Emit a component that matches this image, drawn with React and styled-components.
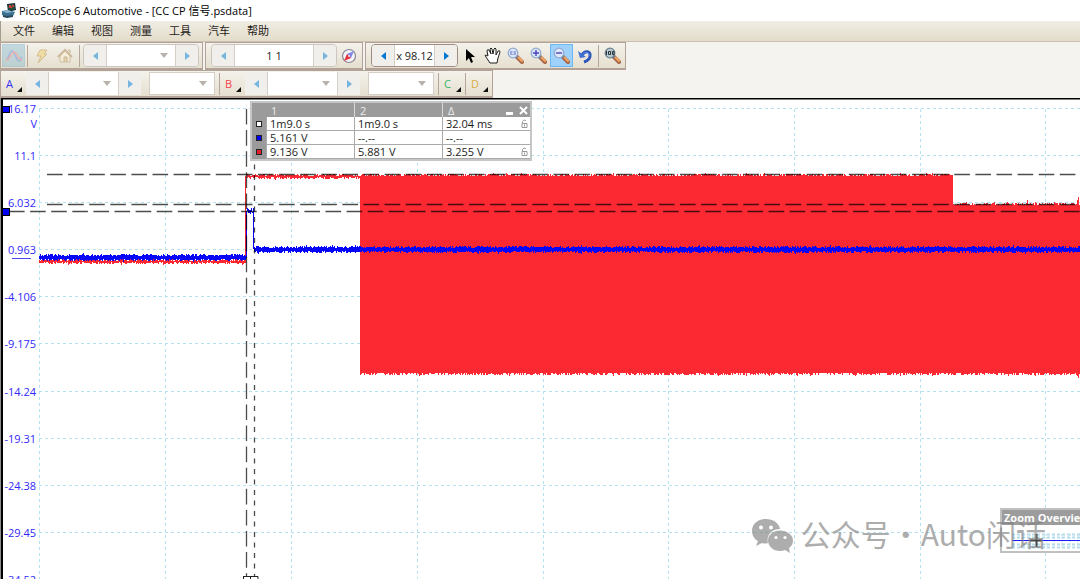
import React from "react";
import styled, { createGlobalStyle } from "styled-components";

const GlobalStyle = createGlobalStyle`
  * { box-sizing: border-box; }
  body {
    margin: 0;
    background: #fff;
    color: #1c1c1c;
    font: 11px/14px "Open Sans", "Noto Sans CJK SC", sans-serif;
  }
  button, input, select { font: inherit; color: inherit; margin: 0; padding: 0; border: 0; border-radius: 0; }
  svg { display: block; }
`;

const Page = styled.main`
  min-height: 100vh;
  overflow: hidden;
`;

const TitleBar = styled.header`
  display: flex;
  align-items: center;
  gap: 2px;
  height: 21px;
  padding-left: 1px;
  background: #fff;
`;

const Title = styled.h1`
  margin: 0;
  font-size: 11px;
  font-weight: 400;
  line-height: 20px;
  color: #000;
`;

const MenuBar = styled.nav`
  display: flex;
  gap: 17px;
  height: 21px;
  padding-left: 12px;
  border-left: 1px solid #a39c8f;
  border-bottom: 1px solid #cbbfb2;
  background: linear-gradient(#f1ede4, #e3dcca);
`;

const MenuItem = styled.button`
  background: none;
  line-height: 20px;
  color: #1f1c19;
`;

const ToolRow = styled.div`
  display: flex;
  gap: 2px;
  height: 28px;
  background: #f5f3f0;
`;

const Strip = styled.div`
  display: flex;
  align-items: center;
  height: 28px;
  padding: 0 ${(p) => p.$end || 0}px 0 ${(p) => p.$start || 0}px;
  border: solid #b3a298;
  border-width: 1px 1px 2px 1px;
  background: linear-gradient(#f4f2ec, #e6dfcf);
`;

const Divider = styled.span`
  width: 1px;
  height: 22px;
  margin: 0 ${(p) => p.$gap || 0}px;
  background: #b5a59b;
`;

const ToolButton = styled.button`
  display: grid;
  place-items: center;
  width: 23px;
  height: 23px;
  background: ${(p) => p.$fill || "none"};
  border: 1px solid ${(p) => p.$line || "transparent"};
  opacity: ${(p) => (p.$dim ? 0.45 : 1)};
`;

const Stepper = styled.div`
  display: flex;
  height: 23px;
  overflow: hidden;
  border: ${(p) => (p.$flat ? "0" : p.$strong ? "1px solid #a08c80" : "1px solid #cdc6c0")};
  border-radius: ${(p) => (p.$flat ? 0 : 4)}px;
  background: #f1efeb;
`;

const StepButton = styled.button`
  display: grid;
  place-items: center;
  width: 22px;
  background: #f1efeb;
  color: ${(p) => (p.$strong ? "#0878cf" : "#75b5df")};
`;

const Field = styled.input`
  width: ${(p) => p.$w}px;
  background: #fff;
  border: solid #d5cec7;
  border-width: 0 1px;
  text-align: center;
`;

const Combo = styled.label`
  display: grid;
  align-items: center;
  width: ${(p) => p.$w}px;
  height: ${(p) => (p.$boxed ? "23px" : "auto")};
  margin-left: ${(p) => (p.$boxed ? 8 : 0)}px;
  margin-right: ${(p) => (p.$boxed ? 4 : 0)}px;
  border: 1px solid #d5cec7;
  border-width: ${(p) => (p.$boxed ? "1px" : "0 1px")};
  background: #fff;
  color: #b9b1aa;
  select, svg { grid-area: 1 / 1; }
  select { width: 100%; height: 100%; appearance: none; background: transparent; }
  svg { justify-self: end; margin-right: 7px; pointer-events: none; }
`;

const ChannelButton = styled.button`
  display: flex;
  align-items: center;
  justify-content: space-between;
  width: ${(p) => p.$w || 25}px;
  height: 24px;
  padding: 0 4px 0 5px;
  background: none;
  color: ${(p) => p.$color};
  svg { align-self: flex-end; margin-bottom: 4px; }
`;

const Scope = styled.section`
  position: relative;
  overflow: hidden;
  background: #fff;
`;

const Plot = styled.svg`
  width: 100%;
  height: auto;
`;

const AxisText = styled.text`
  font-size: 11px;
  fill: #3129fa;
  text-anchor: end;
`;

const Rulers = styled.div`
  position: absolute;
  top: 3px;
  left: 250px;
  width: 282px;
  border: 2px solid #c6c6c6;
  background: #9b9b9b;
`;

const RulerTable = styled.table`
  width: 100%;
  table-layout: fixed;
  border-collapse: separate;
  border-spacing: 0;
  th, td { height: 14px; padding: 0 0 0 3px; line-height: 13px; text-align: left; }
  th { color: #ececec; font-weight: 400; border-left: 1px solid #d8d8d8; padding-left: 5px; }
  th:nth-child(-n + 2) { border-left: 0; }
  td { background: #fff; border: solid #aaa; border-width: 0 0 1px 1px; }
  td:first-child { background: #9b9b9b; border: 0; padding: 0 0 0 4px; }
`;

const CellLine = styled.span`
  display: flex;
  justify-content: space-between;
  align-items: center;
  padding-right: 2px;
`;

const WindowButtons = styled.span`
  display: flex;
  gap: 6px;
`;

const GlyphButton = styled.button`
  display: grid;
  place-items: center;
  height: 12px;
  background: none;
`;

const Swatch = styled.span`
  display: block;
  width: 6px;
  height: 6px;
  border: 1px solid #222;
  background: ${(p) => p.$color};
`;

const Overview = styled.aside`
  position: absolute;
  right: 0;
  bottom: 26px;
  width: 80px;
  height: 45px;
  overflow: hidden;
  border: 2px solid #c0c0c0;
  border-right: 0;
  background: #fff;
`;

const OverviewTitle = styled.h2`
  margin: 0;
  padding-left: 2px;
  background: #9c9c9c;
  color: #fff;
  font-size: 11px;
  font-weight: 700;
  line-height: 15px;
  white-space: nowrap;
`;

const Watermark = styled.div`
  position: absolute;
  right: 34px;
  bottom: 26px;
  display: flex;
  align-items: flex-end;
  gap: 8px;
  color: #808080;
  opacity: 0.64;
  font: 30px/40px "Noto Sans CJK SC", sans-serif;
  white-space: pre;
`;

const Arrow = ({ right }) => (
  <svg width="5" height="8" viewBox="0 0 5 8">
    <path d={right ? "M0 0L5 4L0 8Z" : "M5 0L0 4L5 8Z"} fill="currentColor" />
  </svg>
);

const Caret = () => (
  <svg width="8" height="5" viewBox="0 0 8 5">
    <path d="M0 0H8L4 5Z" fill="currentColor" />
  </svg>
);

const Select = ({ w, boxed, label }) => (
  <Combo $w={w} $boxed={boxed}>
    <select aria-label={label} />
    <Caret />
  </Combo>
);

const Channel = ({ name, color, w }) => (
  <ChannelButton $color={color} $w={w}>
    {name}
    <svg width="5" height="5" viewBox="0 0 5 5"><path d="M5 0V5H0Z" fill="#111" /></svg>
  </ChannelButton>
);

const ChannelInputs = ({ name, color }) => (
  <>
    <Channel name={name} color={color} />
    <Stepper $flat>
      <StepButton aria-label={`${name} lower range`}><Arrow /></StepButton>
      <Select w={71} label={`${name} range`} />
      <StepButton aria-label={`${name} higher range`}><Arrow right /></StepButton>
    </Stepper>
    <Select w={66} boxed label={`${name} coupling`} />
  </>
);

const AppIcon = () => (
  <svg width="16" height="16" viewBox="0 0 16 16">
    <path d="M6 1L14 0L15 7L7 9Z" fill="#16313a" />
    <path d="M7 2L13 1L14 6L8 7Z" fill="#25513a" />
    <path d="M8 5L9 2L10 5L12 2L13 4" fill="none" stroke="#ee3b39" />
    <path d="M1 8L7 7L14 9L12 13L6 14L1 12Z" fill="#3b7191" />
    <path d="M1 8L7 7L12 9L6 10Z" fill="#8bb6ce" />
    <path d="M2 12L6 13L12 12V14L6 15L2 14Z" fill="#28495b" />
  </svg>
);

const Wave = () => (
  <svg width="18" height="16" viewBox="0 0 18 16" fill="none" strokeWidth="1.5">
    <path d="M1 11C4 12 4 3 7 3S11 13 14 13S15 10 17 9" stroke="#4f7de0" />
    <path d="M1 12C5 12 6 5 9 4S12 12 17 12" stroke="#ec7268" />
  </svg>
);

const Bolt = () => (
  <svg width="14" height="16" viewBox="0 0 14 16">
    <path d="M5 2H12L9 6H12L3 15L6 8H2Z" fill="#f2cf58" stroke="#b5893b" />
  </svg>
);

const House = () => (
  <svg width="16" height="16" viewBox="0 0 16 16">
    <path d="M3 8V14H13V8L8 3Z" fill="#fff5d5" stroke="#ae9362" />
    <path d="M1 9L8 2L15 9" fill="none" stroke="#a77f4c" strokeWidth="2" />
    <path d="M7 14V9H10V14M11 2H13V5" fill="#d7b974" stroke="#a07c4b" />
  </svg>
);

const Compass = () => (
  <svg width="16" height="16" viewBox="0 0 16 16">
    <circle cx="8" cy="8" r="6.5" fill="#f3f4f8" stroke="#8a8594" strokeWidth="1.2" />
    <path d="M13 3L10 10L6 6Z" fill="#7f86e6" />
    <path d="M3 13L6 6L10 10Z" fill="#e5313a" />
    <circle cx="8" cy="8" r="1" fill="#f6dfe2" />
  </svg>
);

const Pointer = () => (
  <svg width="14" height="16" viewBox="0 0 14 16">
    <path d="M3 1V13L6 10L8 15L10 14L8 9H12Z" fill="#000" />
  </svg>
);

const Hand = () => (
  <svg width="17" height="17" viewBox="0 0 17 17">
    <path d="M6 16L2 10Q0 8 2 8L4 9L3 4Q3 2 5 3L7 7L6 2Q7 0 8 2L9 7L10 2Q11 0 12 2L12 8L14 4Q16 3 16 5L14 11L13 16Z" fill="#fff" stroke="#1f1f1f" strokeLinejoin="round" />
  </svg>
);

const Lens = ({ kind }) => (
  <svg width="17" height="17" viewBox="0 0 17 17">
    <path d="M9 9L15 15" stroke="#a8664a" strokeWidth="4" strokeLinecap="round" />
    <path d="M10 9L15 14" stroke="#f2a55f" strokeWidth="2" strokeLinecap="round" />
    <path d="M9 9L10.500 10.500" stroke="#6f7686" strokeWidth="3.500" />
    <circle cx="6" cy="6" r="4.8" fill={kind === "all" ? "#b9c8ce" : "#dce8fb"} stroke={kind === "all" ? "#6c818c" : "#93a9d0"} strokeWidth="1.3" />
    {kind === "in" && <path d="M3 6H9M6 3V9" stroke="#4943b8" strokeWidth="1.4" />}
    {kind === "out" && <path d="M3 6H9" stroke="#4943b8" strokeWidth="1.4" />}
    {kind === "one" && <path d="M4 4V8M8 4V8M6 4.5V5.5M6 7V8" stroke="#5d69bc" />}
    {kind === "all" && <path d="M2.500 4V8M4.500 4.500H6.500V7.500H4.500ZM8.500 4.500H10V7.500H8.500Z" fill="none" stroke="#26343c" />}
  </svg>
);

const Undo = () => (
  <svg width="16" height="16" viewBox="0 0 16 16">
    <path d="M5 7C8 2 14 3 13 8C13 11 10 13 7 14" fill="none" stroke="#2d56ba" strokeWidth="3" />
    <path d="M5 7C8 3 13 4 12 8" fill="none" stroke="#6592eb" />
    <path d="M1 3L3 10L9 9Z" fill="#3e6ed2" />
  </svg>
);

const Lock = () => (
  <svg width="7" height="9" viewBox="0 0 7 9" fill="none" stroke="#999">
    <path d="M1.5 4V2.5A2 2 0 0 1 5 2" />
    <path d="M1 4.5H6V8.5H1ZM3.5 5.5V7.5" />
  </svg>
);

const WeChat = () => (
  <svg width="41" height="34" viewBox="0 0 41 34">
    <path fill="currentColor" d="M14 0C6 0 0 5 0 12C0 16 2 20 6 22L4 27L10 24Q13 25 16 24C14 16 20 10 28 10C27 4 21 0 14 0Z" />
    <path fill="currentColor" d="M28 11.500C21 11.500 16 16 16 21.500S21 32 28 32Q31 32 33 31L38 34L37 29Q41 26 41 21.500C41 16 35 11.500 28 11.500Z" />
    <g fill="#fff">
      <circle cx="9" cy="8.500" r="2" /><circle cx="19" cy="8.500" r="2" />
      <circle cx="24" cy="18.500" r="1.600" /><circle cx="33" cy="18.500" r="1.600" />
    </g>
  </svg>
);

function makeNoise(seed) {
  let s = seed;
  return () => {
    s = (s * 16807) % 2147483647;
    return s / 2147483647;
  };
}

// One vertical stroke per sample column, its ends scattered around the signal band.
function band(from, to, top, bottom, jitter, seed) {
  const rnd = makeNoise(seed);
  let d = "";
  for (let x = from; x < to; x += 1) {
    const spike = rnd() > 0.96 ? 1 : 0;
    const a = top + Math.round((rnd() - 0.5) * jitter) - spike;
    const b = bottom + Math.round((rnd() - 0.5) * jitter) + spike;
    d += `M${x + 0.5} ${a}V${b}`;
  }
  return d;
}

const redTrace = [
  band(39, 246, 260, 263, 2, 11),
  "M245.500 262V176",
  band(247, 360, 175, 178, 2, 23),
  band(360, 953, 175, 374, 3, 37),
  band(953, 1080, 204, 374, 3, 41),
  "M1078.500 197V378M1077.500 200V376M1027.500 200V206",
].join("");

const blueTrace = [
  band(39, 246, 255, 260, 2, 53),
  "M246.500 258V211",
  band(247, 254, 210, 213, 4, 61),
  "M253.500 211V249",
  band(254, 1080, 247, 252, 2, 71),
].join("");

const axis = [
  ["16.17", 109], ["11.1", 156], ["6.032", 203], ["0.963", 250], ["-4.106", 297], ["-9.175", 344],
  ["-14.24", 392], ["-19.31", 439], ["-24.38", 486], ["-29.45", 533], ["-34.52", 580],
];
const columns = [39, 165, 291, 417, 543, 668, 794, 920, 1045];

const rows = [
  { color: "#fff", cells: ["1m9.0 s", "1m9.0 s", "32.04 ms"], lock: true },
  { color: "#0000f0", cells: ["5.161 V", "--.--", "--.--"], lock: false },
  { color: "#e0202a", cells: ["9.136 V", "5.881 V", "3.255 V"], lock: true },
];

const Waveforms = () => (
  <Plot viewBox="0 98 1080 481" preserveAspectRatio="xMinYMin slice" role="img" aria-label="Signal view">
    <g stroke="#b4e2ee" strokeDasharray="3 3" shapeRendering="crispEdges">
      {axis.map(([t, y]) => <path key={t} d={`M39 ${y - 0.5}H1080`} />)}
      {columns.map((x) => <path key={x} d={`M${x + 0.5} 109V579`} />)}
    </g>
    <g shapeRendering="crispEdges" fill="none">
      <path d={redTrace} stroke="#fc2832" />
      <path d={blueTrace} stroke="#0505fa" />
    </g>
    <g stroke="#000" strokeOpacity="0.7" strokeWidth="1.300">
      <path d="M47 174.500H1080" strokeDasharray="15.600 5.500" />
      <path d="M47 204.500H1080" strokeDasharray="15.600 5.500" />
      <path d="M9 211.500H1080" strokeDasharray="15.600 5.500" />
      <path d="M246.500 109V576" strokeDasharray="15.600 5.500" />
      <path d="M254.500 112V576" strokeDasharray="5 5.500" />
    </g>
    {axis.map(([t, y]) => <AxisText key={t} x="36" y={y + 4}>{t}</AxisText>)}
    <AxisText x="37" y="128">V</AxisText>
    <path d="M12 258.500H31" stroke="#4a46ee" />
    <path d="M0 98.500H1080" stroke="#000" strokeWidth="2" />
    <path d="M0.500 98V579" stroke="#8d8d8d" />
    <path d="M2 98V579" stroke="#000" strokeWidth="2" />
    <g fill="#0000f5" stroke="#000">
      <rect x="2.500" y="106.500" width="7" height="6" />
      <rect x="2.500" y="208.500" width="7" height="7" />
    </g>
    <path d="M243 576.500H258V579M243.500 576V579M250.500 576V579" fill="none" stroke="#222" />
  </Plot>
);

const menus = ["文件", "编辑", "视图", "测量", "工具", "汽车", "帮助"];

export default function App() {
  return (
    <Page>
      <GlobalStyle />
      <TitleBar>
        <AppIcon />
        <Title>PicoScope 6 Automotive - [CC CP 信号.psdata]</Title>
      </TitleBar>
      <MenuBar>
        {menus.map((m) => <MenuItem key={m}>{m}</MenuItem>)}
      </MenuBar>
      <ToolRow>
        <Strip $start={1} $end={3}>
          <ToolButton $dim $fill="#8bbcd0" $line="#70aecb" aria-label="Scope mode"><Wave /></ToolButton>
          <Divider $gap={2} />
          <ToolButton $dim aria-label="Auto setup"><Bolt /></ToolButton>
          <ToolButton $dim aria-label="Home"><House /></ToolButton>
          <Divider $gap={3} />
          <Stepper>
            <StepButton aria-label="Shorter timebase"><Arrow /></StepButton>
            <Select w={70} label="Timebase" />
            <StepButton aria-label="Longer timebase"><Arrow right /></StepButton>
          </Stepper>
        </Strip>
        <Strip $start={5} $end={2}>
          <Stepper>
            <StepButton aria-label="Previous buffer"><Arrow /></StepButton>
            <Field $w={80} defaultValue="1 1" aria-label="Buffer" />
            <StepButton aria-label="Next buffer"><Arrow right /></StepButton>
          </Stepper>
          <ToolButton aria-label="Buffer navigator"><Compass /></ToolButton>
        </Strip>
        <Strip $start={5} $end={1}>
          <Stepper $strong>
            <StepButton $strong aria-label="Decrease zoom"><Arrow /></StepButton>
            <Field $w={41} defaultValue="x 98.12" aria-label="Zoom" />
            <StepButton $strong aria-label="Increase zoom"><Arrow right /></StepButton>
          </Stepper>
          <ToolButton aria-label="Select"><Pointer /></ToolButton>
          <ToolButton aria-label="Pan"><Hand /></ToolButton>
          <ToolButton aria-label="Zoom to region"><Lens kind="one" /></ToolButton>
          <ToolButton aria-label="Zoom in"><Lens kind="in" /></ToolButton>
          <ToolButton $fill="#9fd2fb" $line="#6db8f2" aria-label="Zoom out"><Lens kind="out" /></ToolButton>
          <ToolButton aria-label="Undo zoom"><Undo /></ToolButton>
          <Divider $gap={2} />
          <ToolButton aria-label="Full view"><Lens kind="all" /></ToolButton>
        </Strip>
      </ToolRow>
      <ToolRow>
        <Strip>
          <ChannelInputs name="A" color="#3630f0" />
          <Divider />
          <ChannelInputs name="B" color="#f5424c" />
          <Divider />
          <Channel name="C" color="#32b66a" w={26} />
          <Divider />
          <Channel name="D" color="#d9ae42" w={26} />
        </Strip>
      </ToolRow>
      <Scope>
        <Waveforms />
        <Rulers>
          <RulerTable>
            <colgroup>
              <col width="14" /><col width="88" /><col width="88" /><col width="88" />
            </colgroup>
            <thead>
              <tr>
                <th aria-label="Channel" />
                <th>1</th>
                <th>2</th>
                <th>
                  <CellLine>
                    Δ
                    <WindowButtons>
                      <GlyphButton aria-label="Minimise">
                        <svg width="7" height="9" viewBox="0 0 7 9"><path d="M0 7.500H7" stroke="#fff" strokeWidth="3" /></svg>
                      </GlyphButton>
                      <GlyphButton aria-label="Close">
                        <svg width="9" height="9" viewBox="0 0 9 9"><path d="M1 1L8 8M8 1L1 8" stroke="#fff" strokeWidth="2" /></svg>
                      </GlyphButton>
                    </WindowButtons>
                  </CellLine>
                </th>
              </tr>
            </thead>
            <tbody>
              {rows.map((r) => (
                <tr key={r.color}>
                  <td><Swatch $color={r.color} /></td>
                  <td>{r.cells[0]}</td>
                  <td>{r.cells[1]}</td>
                  <td><CellLine>{r.cells[2]}{r.lock && <Lock />}</CellLine></td>
                </tr>
              ))}
            </tbody>
          </RulerTable>
        </Rulers>
        <Overview>
          <OverviewTitle>Zoom Overview</OverviewTitle>
          <svg width="90" height="27" viewBox="0 0 90 27">
            <path d="M10 9.500H90M10 12.500H90M10 19.500H90M10 22.500H90" stroke="#b5dcea" strokeWidth="2" strokeDasharray="3 2" />
            <path d="M12 9V22M20 9V22M28 9V22M36 9V22M44 9V22M52 9V22M60 9V22M68 9V22M76 9V22" stroke="#b5dcea" strokeDasharray="2 1" />
            <path d="M10 15.500H90" stroke="#1a1aff" />
            <path d="M28 15.500H40M34.500 9V22" stroke="#444" strokeWidth="2" />
          </svg>
        </Overview>
        <Watermark>
          <WeChat />
          <span>公众号·Auto闲话</span>
        </Watermark>
      </Scope>
    </Page>
  );
}
